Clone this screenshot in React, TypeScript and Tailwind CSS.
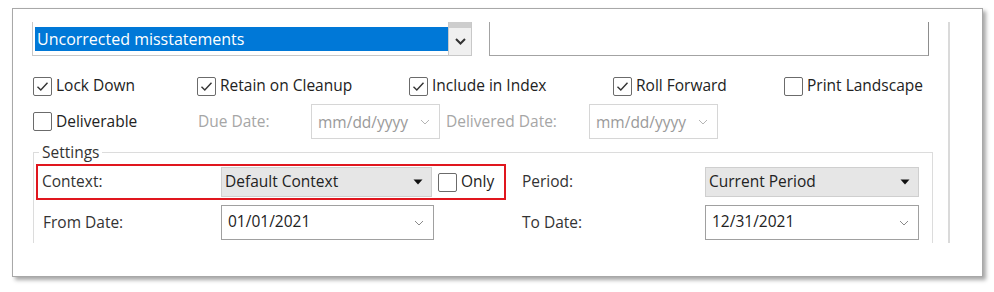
import React from 'react';

const font = { fontFamily: '"Open Sans", "Noto Sans", sans-serif' };

function Check({ checked }: { checked?: boolean }) {
  return (
    <span className="flex h-[19px] w-[19px] shrink-0 items-center justify-center rounded-[2px] border border-[#6b6b6b] bg-white">
      {checked && (
        <svg width="13" height="11" viewBox="0 0 13 11" fill="none">
          <path d="M1.5 5.8 L4.8 9 L11.5 1.8" stroke="#333" strokeWidth="1.4" />
        </svg>
      )}
    </span>
  );
}

function Chevron({ color = '#9a9a9a' }: { color?: string }) {
  return (
    <svg width="10" height="6" viewBox="0 0 10 6" fill="none">
      <path d="M1 1 L5 5 L9 1" stroke={color} strokeWidth="1" />
    </svg>
  );
}

function Caret() {
  return (
    <svg width="10" height="6" viewBox="0 0 10 6">
      <path d="M0.5 0.5 H9.5 L5 5.5 Z" fill="#111" />
    </svg>
  );
}

function CheckItem({ label, checked, w }: { label: string; checked?: boolean; w: string }) {
  return (
    <div className={`flex items-center gap-[4px] ${w}`}>
      <Check checked={checked} />
      <span className="text-[15.5px] text-[#222]">{label}</span>
    </div>
  );
}

function DateBox({ w, value, disabled }: { w: string; value: string; disabled?: boolean }) {
  return (
    <div
      className={`flex h-[35px] ${w} shrink-0 items-start justify-between border bg-white pl-[6px] pr-[9px] ${
        disabled ? 'border-[#d6d6d6] pt-[6px] text-[#9a9a9a]' : 'border-[#a0a0a0] pt-[4px] text-[#222]'
      } text-[15.5px]`}
    >
      <span>{value}</span>
      <span className={disabled ? 'pt-[8px]' : 'pt-[10px]'}>
        <Chevron color={disabled ? '#b5b5b5' : '#8a8a8a'} />
      </span>
    </div>
  );
}

function Combo({ w, value }: { w: string; value: string }) {
  return (
    <div className={`flex h-[30px] ${w} shrink-0 items-center justify-between border border-[#cfcfcf] bg-[#e6e6e6] pl-[3px] pr-[8px] text-[15.5px] text-[#222]`}>
      <span>{value}</span>
      <Caret />
    </div>
  );
}

export default function App() {
  return (
    <div className="h-[292px] w-[994px] bg-white pl-[12px] pt-[8px]" style={font}>
      <div className="flex h-[269px] w-[971px] border border-[#a8a8a8] bg-white pt-[13px] shadow-[3px_3px_4px_rgba(0,0,0,0.35)]">
        <div className="h-[221px] w-[935px] overflow-hidden">
          {/* top row */}
          <div className="flex h-[34px] gap-[17px] pl-[19px]">
            <div className="flex w-[440px] border-b border-l border-[#c8c8c8] pb-[4px] pl-[2px] pt-[5px]">
              <div className="flex flex-1 items-center bg-[#0078d7] pl-[2px] text-[16px] text-white">
                Uncorrected misstatements
              </div>
              <div className="-mt-[5px] -mb-[4px] flex w-[24px] flex-col border-l border-r border-[#c8c8c8] bg-[#f0f0f0]">
                <div className="h-[6px] bg-[#cdcdcd]" />
                <div className="flex flex-1 items-center justify-center">
                  <svg width="11" height="7" viewBox="0 0 11 7" fill="none">
                    <path d="M1 1 L5.5 5.5 L10 1" stroke="#333" strokeWidth="2" />
                  </svg>
                </div>
              </div>
            </div>
            <div className="w-[440px] border-b border-l border-r border-[#a3a3a3] border-r-[#8d8d8d]" />
          </div>

          {/* checkbox row */}
          <div className="mt-[19px] flex h-[22px] items-center pl-[20px]">
            <CheckItem label="Lock Down" checked w="w-[164px]" />
            <CheckItem label="Retain on Cleanup" checked w="w-[212px]" />
            <CheckItem label="Include in Index" checked w="w-[204px]" />
            <CheckItem label="Roll Forward" checked w="w-[171px]" />
            <CheckItem label="Print Landscape" w="w-[150px]" />
          </div>

          {/* deliverable row */}
          <div className="mt-[7px] flex h-[35px] items-center pl-[20px]">
            <CheckItem label="Deliverable" w="w-[165px]" />
            <span className="w-[113px] text-[15.5px] text-[#a6a6a6]">Due Date:</span>
            <DateBox w="w-[129px]" value="mm/dd/yyyy" disabled />
            <span className="w-[149px] pl-[6px] text-[15.5px] text-[#a6a6a6]">Delivered Date:</span>
            <DateBox w="w-[129px]" value="mm/dd/yyyy" disabled />
          </div>

          {/* settings group */}
          <div className="relative mt-[13px] ml-[20px] h-[100px] w-[900px] border-l border-r border-t border-[#dcdcdc] pt-[11px]">
            <span className="absolute -top-[12px] left-[5px] bg-white px-[3px] text-[15.5px] leading-[22px] text-[#333]">
              Settings
            </span>
            <div className="flex items-center">
              <div className="ml-[2px] flex h-[36px] w-[470px] items-center border-2 border-[#e0161e] pl-[4px]">
                <span className="w-[179px] text-[15.5px] text-[#333]">Context:</span>
                <Combo w="w-[211px]" value="Default Context" />
                <span className="ml-[6px] flex items-center gap-[4px]">
                  <Check />
                  <span className="text-[15.5px] text-[#222]">Only</span>
                </span>
              </div>
              <span className="w-[199px] pl-[16px] text-[15.5px] text-[#333]">Period:</span>
              <Combo w="w-[214px]" value="Current Period" />
            </div>
            <div className="mt-[5px] flex items-center">
              <span className="w-[187px] pl-[9px] text-[15.5px] text-[#333]">From Date:</span>
              <DateBox w="w-[213px]" value="01/01/2021" />
              <span className="w-[271px] pl-[88px] text-[15.5px] text-[#333]">To Date:</span>
              <DateBox w="w-[214px]" value="12/31/2021" />
            </div>
          </div>
        </div>
        <div className="ml-[0px] h-[221px] w-[2px] bg-[#dadada]" />
      </div>
    </div>
  );
}
